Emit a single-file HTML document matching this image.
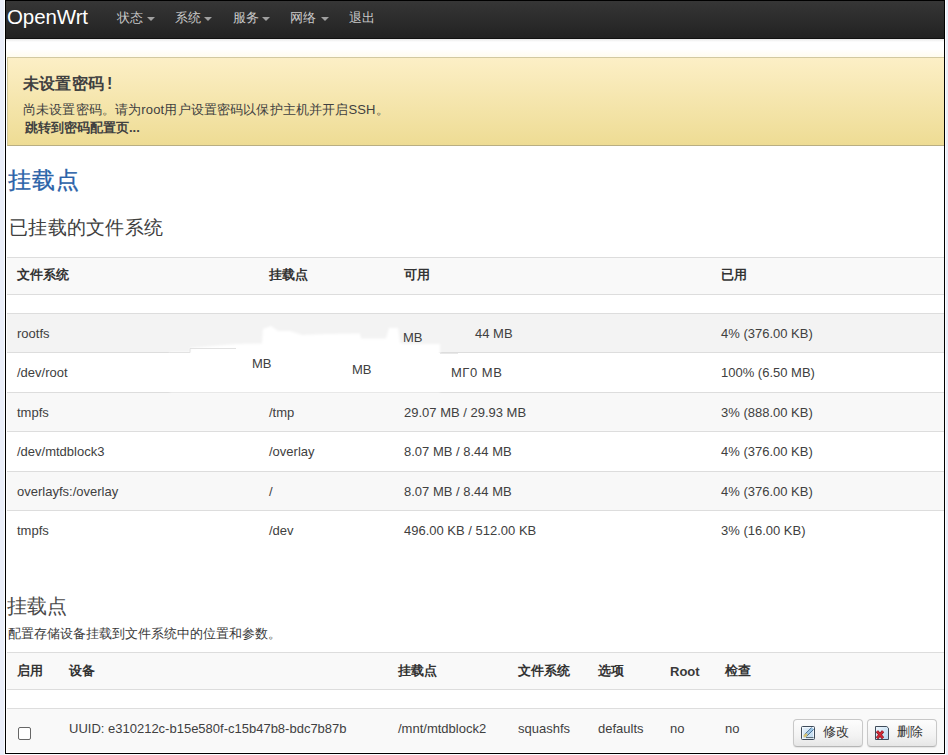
<!DOCTYPE html>
<html><head><meta charset="utf-8">
<style>
*{margin:0;padding:0;box-sizing:border-box}
html,body{width:948px;height:755px;overflow:hidden;background:#ebeffa;font-family:"Liberation Sans",sans-serif;font-size:13px;color:#404040}
.a{position:absolute;white-space:nowrap}
#frame{position:absolute;left:5px;top:0;width:940px;height:754px;border:1px solid #000;background:#fff;overflow:hidden;box-shadow:0 0 0 1px #fafcff}
#nav{position:absolute;left:0;top:0;width:938px;height:38px;background:linear-gradient(#363636,#222);border-bottom:1px solid #111}
.brand{left:1px;top:4px;font-size:20.5px;color:#fff;letter-spacing:-0.1px}
.nv{top:8px;font-size:13px;color:#c8c8c8}
.caret{position:absolute;width:0;height:0;border-left:4px solid transparent;border-right:4px solid transparent;border-top:4px solid #a0a0a0}
#alert{position:absolute;left:1px;top:56px;width:940px;height:89px;background:linear-gradient(#fcefc6,#eedc94);border:1px solid #d2c9a0;border-bottom-color:#b9ae82;border-right:none}
.row{position:absolute;left:1px;width:937px;border-top:1px solid #ddd}
.th{font-weight:bold;color:#333}
.btn{position:absolute;height:28px;width:70px;border:1px solid #c8c8c8;border-bottom-color:#b5b5b5;border-radius:4px;background:linear-gradient(#fdfdfd,#f3f3f3 60%,#e6e6e6);box-shadow:0 1px 1px rgba(0,0,0,.08)}
.btn svg{position:absolute;left:7px;top:6px}
.btn span{position:absolute;left:29px;top:3px;font-size:13px;color:#333;white-space:nowrap}
</style></head><body>
<div id="frame">
  <div id="nav">
    <div class="a brand">OpenWrt</div>
    <div class="a nv" style="left:111px">状态</div><div class="caret" style="left:141px;top:16px"></div>
    <div class="a nv" style="left:169px">系统</div><div class="caret" style="left:198px;top:16px"></div>
    <div class="a nv" style="left:227px">服务</div><div class="caret" style="left:256px;top:16px"></div>
    <div class="a nv" style="left:284px">网络</div><div class="caret" style="left:315px;top:16px"></div>
    <div class="a nv" style="left:343px">退出</div>
  </div>
  <div style="position:absolute;left:0;top:38px;width:938px;height:18px;background:linear-gradient(#e8e8e8,#fff 3px,#fff 10px,#fffcee 18px)"></div>
  <div id="alert">
    <div class="a" style="left:15px;top:16px;font-size:16px;font-weight:bold;color:#404040;letter-spacing:0.2px">未设置密码<span style="margin-left:3px">!</span></div>
    <div class="a" style="left:15px;top:43px;font-size:13px;letter-spacing:0.15px">尚未设置密码。请为root用户设置密码以保护主机并开启SSH。</div>
    <div class="a" style="left:17px;top:61px;font-size:13px;font-weight:bold">跳转到密码配置页...</div>
  </div>
  <div class="a" style="left:1.5px;top:164px;font-size:23px;letter-spacing:1.2px;font-weight:normal;-webkit-text-stroke:0.3px #2a62a8;color:#2a62a8">挂载点</div>
  <div class="a" style="left:3px;top:214px;font-size:19px;letter-spacing:0.3px;color:#404040">已挂载的文件系统</div>

  <!-- table 1 -->
  <div class="row" style="top:256px;height:38px;background:#f9f9f9;border-bottom:1px solid #ddd"></div>
  <div class="a th" style="left:11px;top:265px">文件系统</div>
  <div class="a th" style="left:263px;top:265px">挂载点</div>
  <div class="a th" style="left:398px;top:265px">可用</div>
  <div class="a th" style="left:715px;top:265px">已用</div>

  <div class="row" style="top:312px;height:40px;background:#f3f3f3"></div>
  <div class="row" style="top:351px;height:40px;background:#fff"></div>
  <div class="row" style="top:391px;height:40px;background:#f8f8f8"></div>
  <div class="row" style="top:430px;height:40px;background:#fff"></div>
  <div class="row" style="top:470px;height:40px;background:#f8f8f8"></div>
  <div class="row" style="top:509px;height:40px;background:#fff"></div>


  <svg class="a" style="left:-6px;top:-1px" width="948" height="755">
    <defs><filter id="bl" x="-5%" y="-5%" width="110%" height="110%"><feGaussianBlur stdDeviation="0.9"/></filter></defs>
    <polygon filter="url(#bl)" fill="#fff" points="170,352 190,352 190,348 236,344 262,343.5 263,329 271,326 278,331 290,331 302,335 327,334 360,333.5 361,338.5 386,338.5 389,328 398,328 400,343 404,344 440,344 440,353 440,392 170,392"/>
    <path d="M170 352.5 H190 V348.5 H236" stroke="#e2e2e2" fill="none"/>
    <path d="M440 353.5 H458" stroke="#e8e8e8" fill="none"/>
  </svg>
  <div class="a" style="left:397px;top:329px">MB</div>
  <div class="a" style="left:469px;top:325px">44 MB</div>
  <div class="a" style="left:246px;top:355px">MB</div>
  <div class="a" style="left:346px;top:361px">MB</div>
  <div class="a" style="left:445px;top:364px;letter-spacing:0.5px">MΓ0 MB</div>
  <div class="a" style="left:11px;top:325px">rootfs</div>
  <div class="a" style="left:715px;top:325px">4% (376.00 KB)</div>
  <div class="a" style="left:11px;top:364px">/dev/root</div>
  <div class="a" style="left:715px;top:364px">100% (6.50 MB)</div>
  <div class="a" style="left:11px;top:404px">tmpfs</div>
  <div class="a" style="left:263px;top:404px">/tmp</div>
  <div class="a" style="left:398px;top:404px">29.07 MB / 29.93 MB</div>
  <div class="a" style="left:715px;top:404px">3% (888.00 KB)</div>
  <div class="a" style="left:11px;top:443px">/dev/mtdblock3</div>
  <div class="a" style="left:263px;top:443px">/overlay</div>
  <div class="a" style="left:398px;top:443px">8.07 MB / 8.44 MB</div>
  <div class="a" style="left:715px;top:443px">4% (376.00 KB)</div>
  <div class="a" style="left:11px;top:483px">overlayfs:/overlay</div>
  <div class="a" style="left:263px;top:483px">/</div>
  <div class="a" style="left:398px;top:483px">8.07 MB / 8.44 MB</div>
  <div class="a" style="left:715px;top:483px">4% (376.00 KB)</div>
  <div class="a" style="left:11px;top:522px">tmpfs</div>
  <div class="a" style="left:263px;top:522px">/dev</div>
  <div class="a" style="left:398px;top:522px">496.00 KB / 512.00 KB</div>
  <div class="a" style="left:715px;top:522px">3% (16.00 KB)</div>

  <!-- section 2 -->
  <div class="a" style="left:1px;top:592px;font-size:20px;color:#4a4a4a">挂载点</div>
  <div class="a" style="left:1.5px;top:624px;font-size:13px;color:#3a3a3a">配置存储设备挂载到文件系统中的位置和参数。</div>

  <div class="row" style="top:651px;height:38px;background:#f9f9f9;border-bottom:1px solid #ddd"></div>
  <div class="a th" style="left:11px;top:661px">启用</div>
  <div class="a th" style="left:63px;top:661px">设备</div>
  <div class="a th" style="left:392px;top:661px">挂载点</div>
  <div class="a th" style="left:512px;top:661px">文件系统</div>
  <div class="a th" style="left:592px;top:661px">选项</div>
  <div class="a" style="left:664px;top:663px;font-size:13px;font-weight:bold;color:#3a3a3a">Root</div>
  <div class="a th" style="left:719px;top:661px">检查</div>
  <div class="row" style="top:707px;height:44px;background:#f9f9f9"></div>
  <div class="a" style="left:12px;top:726px;width:13px;height:13px;border:1px solid #666;border-radius:2px;background:#fff"></div>
  <div class="a" style="left:63px;top:720px">UUID: e310212c-b15e580f-c15b47b8-bdc7b87b</div>
  <div class="a" style="left:392px;top:720px">/mnt/mtdblock2</div>
  <div class="a" style="left:512px;top:720px">squashfs</div>
  <div class="a" style="left:592px;top:720px">defaults</div>
  <div class="a" style="left:664px;top:720px">no</div>
  <div class="a" style="left:719px;top:720px">no</div>

  <div class="btn" style="left:787px;top:718px"><svg width="14" height="14" viewBox="0 0 14 14">
    <defs><linearGradient id="g1" x1="0" y1="0" x2="1" y2="1"><stop offset="0" stop-color="#eaf3fa"/><stop offset="1" stop-color="#b9d7ee"/></linearGradient></defs>
    <rect x="0.5" y="0.5" width="13" height="13" rx="1" fill="url(#g1)" stroke="#3f4c5a"/>
    <rect x="1.5" y="1.5" width="11" height="11" fill="none" stroke="#f6fbff" stroke-width="0.8"/>
    <path d="M4.5 9.8 L11.8 2.5" stroke="#9cc6e6" stroke-width="2.6"/>
    <path d="M3.6 8.4 L10.6 1.6 M5.6 10.4 L12.6 3.4" stroke="#3f6488" stroke-width="0.9"/>
    <path d="M3 10.8 L6 7.8" stroke="#d8c474" stroke-width="2.6"/>
    <path d="M5 11.6 H12.5" stroke="#56656f" stroke-width="1"/>
  </svg><span>修改</span></div>
  <div class="btn" style="left:861px;top:718px"><svg width="14" height="14" viewBox="0 0 14 14">
    <defs><linearGradient id="g2" x1="0" y1="0" x2="1" y2="1"><stop offset="0" stop-color="#f2f8fd"/><stop offset="1" stop-color="#b3d5ef"/></linearGradient></defs>
    <path d="M0.5 0.5 H11.8 L13.5 2.2 V13.5 H0.5 Z" fill="url(#g2)" stroke="#3f4c5a"/>
    <path d="M2 5.2 L8 12.2 M8 5.2 L2 12.2" stroke="#7a1a22" stroke-width="3"/>
    <path d="M2 5.2 L8 12.2 M8 5.2 L2 12.2" stroke="#d22834" stroke-width="1.8"/>
  </svg><span>删除</span></div>
</div>
</body></html>
